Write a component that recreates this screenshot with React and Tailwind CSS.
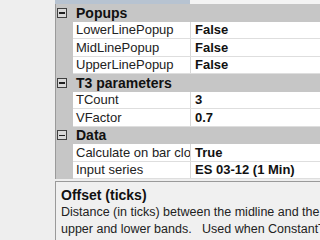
import React from 'react'

const groups = [
  { title: 'Popups', rows: [['LowerLinePopup', 'False'], ['MidLinePopup', 'False'], ['UpperLinePopup', 'False']] },
  { title: 'T3 parameters', rows: [['TCount', '3'], ['VFactor', '0.7']] },
  { title: 'Data', rows: [['Calculate on bar close', 'True'], ['Input series', 'ES 03-12 (1 Min)']] },
]

function Minus() {
  return (
    <div className="w-[10px] h-[10px] border border-[#404040] bg-[#d8d8d8] flex items-center justify-center">
      <div className="w-[6px] h-[1.5px] bg-[#202020]" />
    </div>
  )
}

export default function App() {
  return (
    <div className="w-[320px] h-[240px] overflow-hidden bg-[#eeeeee] flex pl-[55px] text-[13px] leading-none text-[#1a1a1a]"
         style={{ fontFamily: '"Liberation Sans", Arial, sans-serif' }}>
      <div className="flex-1 flex flex-col min-w-0">
        {/* top strip */}
        <div className="h-[4px] flex">
          <div className="w-[135px] bg-[#b7c3d1]" />
          <div className="flex-1 bg-[#f4f4f4]" />
        </div>

        {/* property grid */}
        <div className="flex flex-col border-l border-[#9a9a9a]">
          {groups.map(g => (
            <div key={g.title} className="flex flex-col">
              <div className="h-[17.5px] bg-[#c6c6c6] flex items-center whitespace-nowrap">
                <div className="w-[17px] pl-[1px] flex items-center"><Minus /></div>
                <span className="pl-[3px] font-bold text-[14px] text-[#111]">{g.title}</span>
              </div>
              {g.rows.map(([k, v]) => (
                <div key={k} className="h-[17.5px] flex">
                  <div className="w-[17px] bg-[#c6c6c6] shrink-0" />
                  <div className="flex-1 flex bg-white border-b border-[#dedede]">
                    <div className="w-[118px] shrink-0 pl-[3px] flex items-center overflow-hidden whitespace-nowrap border-r border-[#d8d8d8] text-[#222]">
                      {k}
                    </div>
                    <div className="flex-1 pl-[4px] flex items-center whitespace-nowrap font-bold text-[#111]">{v}</div>
                  </div>
                </div>
              ))}
            </div>
          ))}
        </div>

        {/* description */}
        <div className="mt-[2px] flex-1 border-t border-l border-[#9a9a9a] bg-[#f0f0f0] pl-[5px] pt-[6px] whitespace-nowrap overflow-hidden">
          <div className="font-bold text-[14px] text-[#111]">Offset (ticks)</div>
          <div className="mt-[2px] text-[12.5px] leading-[17px] text-[#222]">
            <div>Distance (in ticks) between the midline and the</div>
            <div>upper and lower bands.&nbsp;&nbsp; Used when ConstantTicks</div>
          </div>
        </div>
      </div>
    </div>
  )
}
